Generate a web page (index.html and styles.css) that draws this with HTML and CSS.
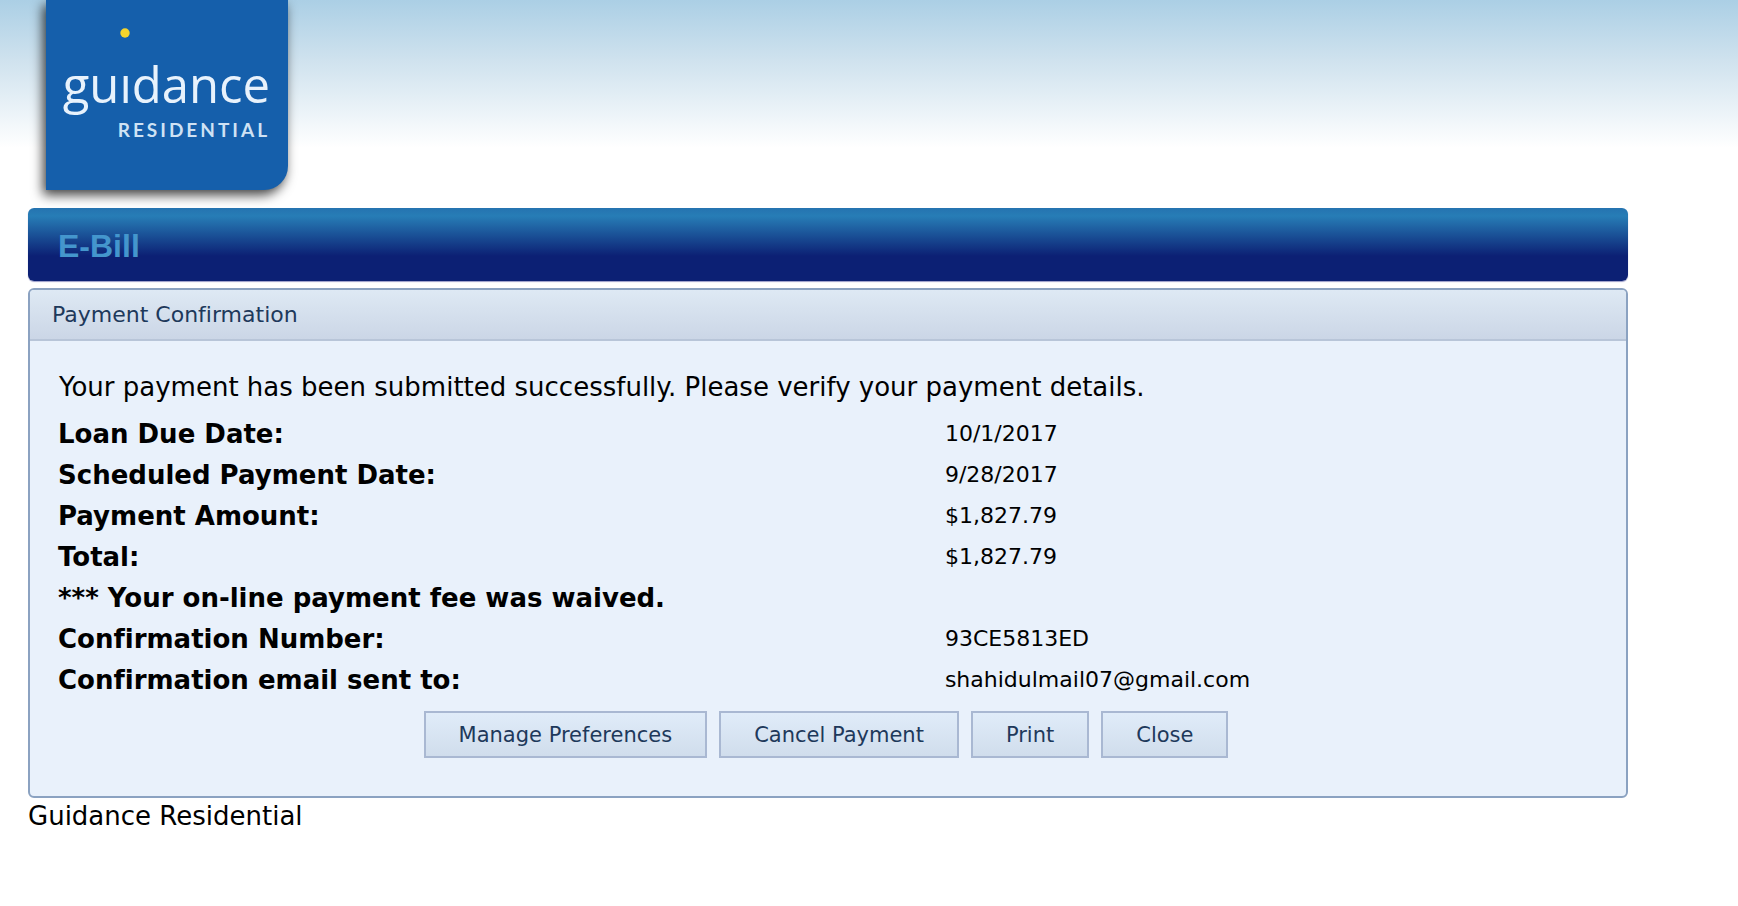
FILE: index.html
```html
<!DOCTYPE html>
<html lang="en">
<head>
<meta charset="utf-8">
<title>E-Bill - Payment Confirmation</title>
<link rel="stylesheet" href="styles.css">
</head>
<body>
<div class="page">
  <header class="masthead">
    <div class="logo">
      <svg class="logo-dot" viewBox="0 0 10 10" aria-hidden="true"><circle cx="5" cy="5" r="4.7" fill="#f5d42c"/></svg>
      <span class="logo-name">guıdance</span>
      <span class="logo-sub">RESIDENTIAL</span>
    </div>
  </header>
  <h1 class="banner">E-Bill</h1>
  <main class="panel">
    <h2 class="panel-title">Payment Confirmation</h2>
    <div class="panel-body">
      <p class="message">Your payment has been submitted successfully. Please verify your payment details.</p>
      <table class="details">
        <tbody>
          <tr><th scope="row">Loan Due Date:</th><td>10/1/2017</td></tr>
          <tr><th scope="row">Scheduled Payment Date:</th><td>9/28/2017</td></tr>
          <tr><th scope="row">Payment Amount:</th><td>$1,827.79</td></tr>
          <tr><th scope="row">Total:</th><td>$1,827.79</td></tr>
          <tr><th scope="row">*** Your on-line payment fee was waived.</th><td></td></tr>
          <tr><th scope="row">Confirmation Number:</th><td>93CE5813ED</td></tr>
          <tr><th scope="row">Confirmation email sent to:</th><td>shahidulmail07@gmail.com</td></tr>
        </tbody>
      </table>
      <div class="actions">
        <button type="button" class="btn">Manage Preferences</button>
        <button type="button" class="btn">Cancel Payment</button>
        <button type="button" class="btn">Print</button>
        <button type="button" class="btn">Close</button>
      </div>
    </div>
  </main>
  <footer class="footer">Guidance Residential</footer>
</div>
</body>
</html>
```
FILE: styles.css
```css
* {
  box-sizing: border-box;
}

body {
  margin: 0;
  background: #fff linear-gradient(#abcfe5, #cfe2ee 60px, #fff 148px) no-repeat;
  color: #000;
  font-family: Verdana, "DejaVu Sans", sans-serif;
  font-size: 26px;
  font-variant-ligatures: none;
  line-height: 32px;
}

.page {
  margin: 0 110px 0 28px;
}

.masthead {
  padding: 0 18px 18px;
}

.logo {
  display: flex;
  flex-direction: column;
  align-items: flex-end;
  width: 242px;
  height: 190px;
  padding: 28px 18px 0 16px;
  border-radius: 0 0 24px 0;
  background: #155fab;
  box-shadow: -3px 5px 12px rgba(0, 0, 0, 0.75);
  color: #e8f2fc;
}

.logo-dot {
  align-self: flex-start;
  width: 10px;
  height: 10px;
  margin-left: 58px;
}

.logo-name {
  margin-top: 19px;
  font-family: "Open Sans", sans-serif;
  font-size: 49px;
  line-height: 54px;
}

.logo-sub {
  margin-top: 7px;
  font-family: Lato, sans-serif;
  font-size: 19px;
  font-weight: 700;
  line-height: 24px;
  letter-spacing: 3px;
  color: #cfe2f4;
}

.banner {
  margin: 0 0 7px;
  padding: 22px 30px 18px;
  border-radius: 6px;
  background: linear-gradient(#2573b0, #277db6 8px, #0c2074 48px);
  box-shadow: 0 1px 1px #9a9cc8;
  color: #4496cd;
  font-family: "Liberation Sans", Arial, sans-serif;
  font-size: 32px;
  font-weight: 700;
  line-height: 33px;
}

.panel {
  overflow: hidden;
  border: 2px solid #8ba2c1;
  border-radius: 6px;
  background: #e9f1fb;
}

.panel-title {
  margin: 0;
  padding: 0 22px;
  border-bottom: 2px solid #b8c5d8;
  background: linear-gradient(#dee9f4, #cbd6e6);
  color: #1e395b;
  font-size: 22px;
  font-weight: 400;
  line-height: 49px;
}

.panel-body {
  padding: 30px 12px 38px 28px;
}

.message {
  margin: 0 0 10px;
  padding-left: 1px;
}

.details {
  width: 100%;
  border-collapse: collapse;
  table-layout: fixed;
}

.details th,
.details td {
  height: 41px;
  padding: 0;
  text-align: left;
  vertical-align: middle;
}

.details th {
  width: 57%;
}

.details td {
  font-size: 22px;
}

.actions {
  display: flex;
  justify-content: center;
  gap: 12px;
  margin-top: 11px;
  padding-right: 20px;
}

.btn {
  padding: 1px 33px 0;
  border: 2px solid #a9b8d2;
  background: linear-gradient(#e0ecf9, #d0ddec);
  color: #1e395b;
  font-family: inherit;
  font-size: 21px;
  font-variant-ligatures: none;
  line-height: 42px;
}

.footer {
  padding-top: 2px;
}
```
